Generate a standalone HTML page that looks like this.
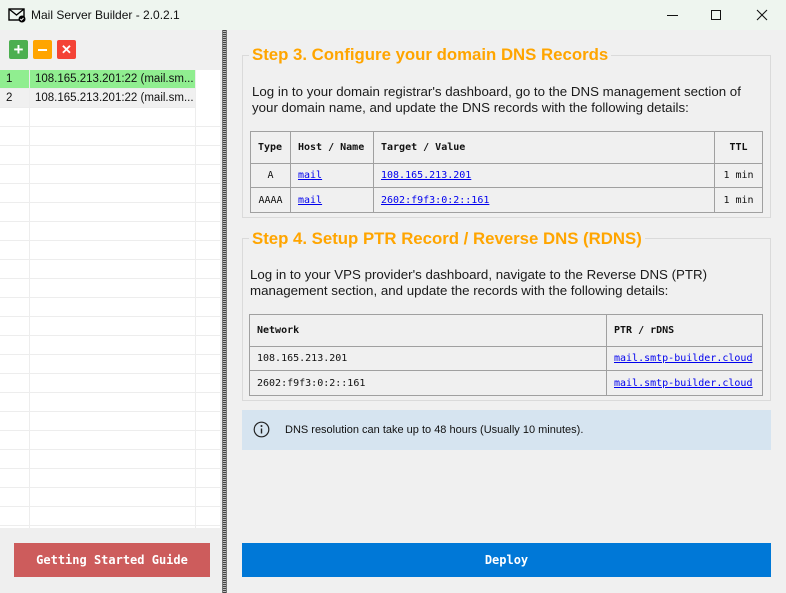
<!DOCTYPE html>
<html><head><style>
*{box-sizing:border-box;margin:0;padding:0}
body{width:786px;height:593px;background:#f0f0f0;font-family:"Liberation Sans",Arial,sans-serif;position:relative;overflow:hidden;color:#111}
.a{position:absolute}
.title{left:0;top:0;width:786px;height:30px;background:#eef5ef}
.grid{left:0;top:70px;width:220px;height:458px;background:#fff}
.row{position:absolute;left:0;width:220px;height:19px;border-bottom:1px solid #ededed}
.vline{position:absolute;top:0;bottom:0;width:1px;background:#ededed}
.cell{position:absolute;top:0;height:19px;line-height:18px;font-size:11.5px;color:#111}
.gb{border:1px solid #dadada}
.gt{font-size:16.8px;font-weight:bold;color:#ffa500;background:#f0f0f0;padding:0 3px;line-height:22px}
.p{font-size:13.3px;line-height:16px;color:#1a1a1a}
table{border-collapse:collapse;position:absolute;font-family:"DejaVu Sans Mono","Liberation Mono",monospace;font-size:10px}
td{border:1px solid #a0a0a0;padding:0 7px;vertical-align:middle}
th{border:1px solid #a0a0a0;padding:0 7px;font-weight:bold;text-align:left}
a{color:#0000ee;text-decoration:underline}
.btn{color:#fff;font-family:"DejaVu Sans Mono",monospace;font-weight:bold;font-size:12px;text-align:center;line-height:34px}
</style></head><body>
<div class="a title"></div>
<svg class="a" style="left:8px;top:8px" width="18" height="15" viewBox="0 0 18 15"><rect x="1" y="1" width="15" height="11" fill="none" stroke="#000" stroke-width="1.4"/><path d="M1 1l7.5 6L16 1" fill="none" stroke="#000" stroke-width="1.4"/><circle cx="14" cy="11" r="3.5" fill="#000"/><path d="M12.3 11l1.2 1.2 2-2.2" stroke="#fff" fill="none" stroke-width="1"/></svg>
<div class="a" style="left:31px;top:8px;font-size:12px;color:#111">Mail Server Builder - 2.0.2.1</div>
<div class="a" style="left:667px;top:15px;width:11px;height:1px;background:#111"></div>
<div class="a" style="left:711px;top:10px;width:10px;height:10px;border:1px solid #111"></div>
<svg class="a" style="left:756px;top:9px" width="12" height="12"><path d="M1 1L11 11M11 1L1 11" stroke="#111" stroke-width="1.1"/></svg>

<div class="a" style="left:9px;top:40px;width:19px;height:19px;background:#4caf50;border-radius:2px;color:#fff;font-weight:bold;font-size:17px;text-align:center;line-height:19px">+</div>
<div class="a" style="left:33px;top:40px;width:19px;height:19px;background:#ffa500;border-radius:2px"><div class="a" style="left:5px;top:9px;width:9px;height:2px;background:#fff"></div></div>
<div class="a" style="left:57px;top:40px;width:19px;height:19px;background:#f44336;border-radius:2px;color:#fff;font-size:13px;text-align:center;line-height:19px;font-weight:bold">✕</div>

<div class="a grid">
<div class="row" style="top:0;background:#90ee90;width:195px"></div>
<div class="row" style="top:19px;background:#f0f0f0;width:195px"></div>
<div class="row" style="top:38px"></div><div class="row" style="top:57px"></div><div class="row" style="top:76px"></div><div class="row" style="top:95px"></div><div class="row" style="top:114px"></div><div class="row" style="top:133px"></div><div class="row" style="top:152px"></div><div class="row" style="top:171px"></div><div class="row" style="top:190px"></div><div class="row" style="top:209px"></div><div class="row" style="top:228px"></div><div class="row" style="top:247px"></div><div class="row" style="top:266px"></div><div class="row" style="top:285px"></div><div class="row" style="top:304px"></div><div class="row" style="top:323px"></div><div class="row" style="top:342px"></div><div class="row" style="top:361px"></div><div class="row" style="top:380px"></div><div class="row" style="top:399px"></div><div class="row" style="top:418px"></div><div class="row" style="top:437px"></div>
<div class="vline" style="left:29px"></div><div class="vline" style="left:195px"></div>
<div class="cell" style="left:6px;top:0">1</div><div class="cell" style="left:35px;top:0">108.165.213.201:22 (mail.sm...</div>
<div class="cell" style="left:6px;top:19px">2</div><div class="cell" style="left:35px;top:19px">108.165.213.201:22 (mail.sm...</div>
</div>
<div class="a" style="left:0;top:528px;width:220px;height:65px;background:#efefef"></div>
<div class="a btn" style="left:14px;top:543px;width:196px;height:34px;background:#cd5c5c">Getting Started Guide</div>
<div class="a" style="left:222px;top:30px;width:5px;height:563px;background:repeating-linear-gradient(#444 0 1px,#bbb 1px 2px);border-left:1px solid #777;border-right:1px solid #777"></div>

<div class="a gb" style="left:242px;top:55px;width:529px;height:163px"></div>
<div class="a gt" style="left:249px;top:44px">Step 3. Configure your domain DNS Records</div>
<div class="a p" style="left:252px;top:84px;width:515px">Log in to your domain registrar's dashboard, go to the DNS management section of your domain name, and update the DNS records with the following details:</div>
<table style="left:250px;top:131px;width:513px">
<tr style="height:32px"><th style="width:40px">Type</th><th style="width:83px">Host / Name</th><th>Target / Value</th><th style="width:48px;text-align:center">TTL</th></tr>
<tr style="height:24px"><td style="text-align:center">A</td><td><a>mail</a></td><td><a>108.165.213.201</a></td><td style="text-align:center">1 min</td></tr>
<tr style="height:25px"><td style="text-align:center">AAAA</td><td><a>mail</a></td><td><a>2602:f9f3:0:2::161</a></td><td style="text-align:center">1 min</td></tr>
</table>

<div class="a gb" style="left:242px;top:238px;width:529px;height:163px"></div>
<div class="a gt" style="left:249px;top:228px">Step 4. Setup PTR Record / Reverse DNS (RDNS)</div>
<div class="a p" style="left:250px;top:267px;width:510px">Log in to your VPS provider's dashboard, navigate to the Reverse DNS (PTR) management section, and update the records with the following details:</div>
<table style="left:249px;top:314px;width:514px">
<tr style="height:32px"><th>Network</th><th style="width:156px">PTR / rDNS</th></tr>
<tr style="height:24px"><td>108.165.213.201</td><td><a>mail.smtp-builder.cloud</a></td></tr>
<tr style="height:25px"><td>2602:f9f3:0:2::161</td><td><a>mail.smtp-builder.cloud</a></td></tr>
</table>

<div class="a" style="left:242px;top:410px;width:529px;height:40px;background:#d6e4f0"></div>
<svg class="a" style="left:253px;top:421px" width="17" height="17"><circle cx="8.5" cy="8.5" r="7.3" fill="none" stroke="#222" stroke-width="1.2"/><circle cx="8.5" cy="5" r="1" fill="#222"/><path d="M8.5 7.5v5" stroke="#222" stroke-width="1.4"/></svg>
<div class="a" style="left:285px;top:424px;font-size:11px;color:#111">DNS resolution can take up to 48 hours (Usually 10 minutes).</div>

<div class="a btn" style="left:242px;top:543px;width:529px;height:34px;background:#0078d7">Deploy</div>
</body></html>
